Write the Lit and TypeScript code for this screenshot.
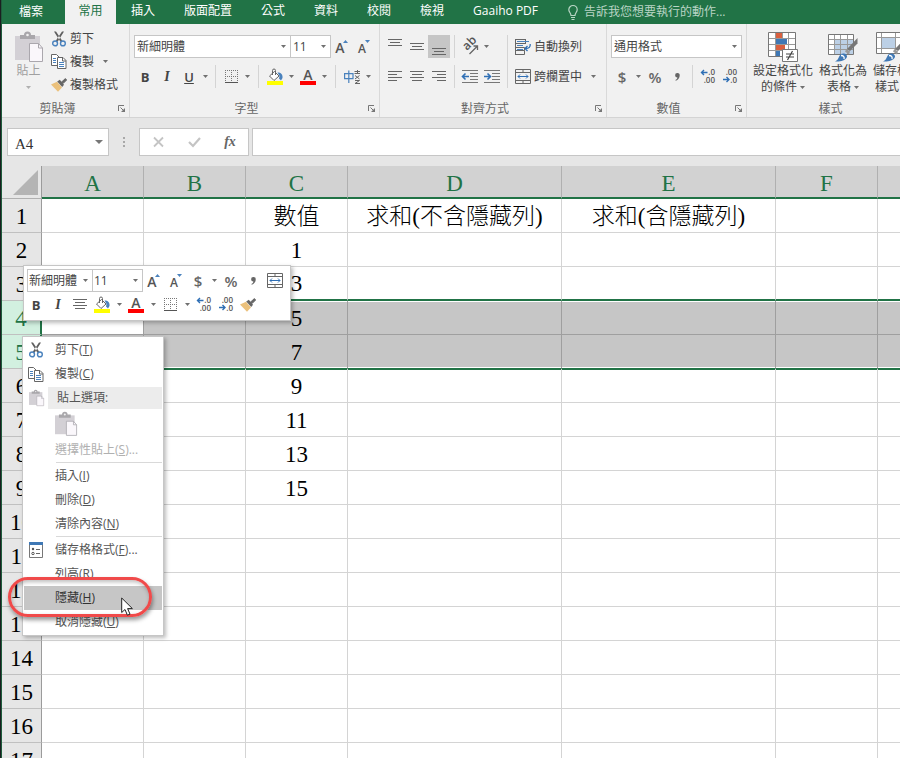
import { LitElement, html, css, svg, nothing, TemplateResult } from "lit";
import { customElement, state } from "lit/decorators.js";
import { classMap } from "lit/directives/class-map.js";

/* ---------- icons ---------- */

const caret = html`<svg class="ic" width="5" height="3" viewBox="0 0 5 3"><path d="M0 0h5L2.5 3z" fill="#707070" /></svg>`;

const scissors = html`<svg class="ic" width="14" height="16" viewBox="0 0 14 16">
  <path d="M2 0.4 4 0.4 10.4 10 8.400 10.8zM12 0.4 10 0.4 3.600 10 5.600 10.8z" fill="#5f5f5f" />
  <circle cx="3.100" cy="12.400" r="2.400" fill="none" stroke="#4a82bd" stroke-width="1.400" />
  <circle cx="10.900" cy="12.400" r="2.400" fill="none" stroke="#4a82bd" stroke-width="1.400" />
</svg>`;

const copy = html`<svg class="ic" width="16" height="15" viewBox="0 0 16 15">
  <path d="M.5 .5h5l2.500 2.500v8.500h-7.500z" fill="#fff" stroke="#666" />
  <path d="M2 4.500h3M2 6.500h3M2 8.500h3" stroke="#4a82bd" />
  <path d="M6.500 3.500h5.500l3 3v8h-8.500z" fill="#fff" stroke="#666" />
  <path d="M11.500 3.500v3.500h3.500" fill="none" stroke="#666" />
  <path d="M8 8.500h5M8 10.500h5M8 12.500h5" stroke="#4a82bd" />
</svg>`;

const brush = html`<svg class="ic" width="16" height="14" viewBox="0 0 16 14">
  <path d="M0 6.500 6 3.800 11 9.600 7 13.800z" fill="#ebc17c" />
  <path d="M6.200 3.400 8.800 1.800 13 6.800 11.200 9z" fill="#666" />
  <path d="M10.400 4.200 14.400.6 15.600 2 12 5.600z" fill="#666" stroke="#666" />
</svg>`;

const paste = (w: number, h: number) => html`<svg class="ic" width=${w} height=${h} viewBox="0 0 28 30">
  <path d="M0 4h25v24H0z" fill="#d3d0d5" />
  <path d="M5 7V3h4a3.500 3.500 0 0 1 7 0h4v4z" fill="#a9a7ab" />
  <circle cx="12.500" cy="3" r="1.300" fill="#f1f1f1" />
  <path d="M14.500 11.500h9l4 4.500v13.500h-13z" fill="#faf7fb" stroke="#aaa7ad" />
  <path d="M23.500 11.500v4.500h4" fill="none" stroke="#aaa7ad" />
</svg>`;

const borders = html`<svg class="ic" width="13" height="13" viewBox="0 0 13 13">
  <path d="M0 .5h13M0 6.500h13M.5 0v12M6.500 0v12M12.500 0v12" stroke="#777" stroke-dasharray="1 1" fill="none" />
  <path d="M0 12.500h13" stroke="#555" />
</svg>`;

const fill = html`<svg class="ic" width="16" height="16" viewBox="0 0 16 16">
  <path d="M2.500 7 7.500 2.500 12 7 7 11.500z" fill="#fff" stroke="#666" />
  <path d="M5.500 6V1.500a1.500 1.500 0 0 1 3 0V6" fill="none" stroke="#666" />
  <path d="M10.500 3.500c3.500 0 5.500 2 5 5.500l-1.500 2.500-2-2 .5-2.500z" fill="#4a82bd" />
  <path d="M0 12h16v4H0z" fill="#ff0" />
</svg>`;

const fontColor = html`<svg class="ic" width="16" height="16" viewBox="0 0 16 16">
  <text x="8" y="11" text-anchor="middle" font-size="14" font-weight="600" fill="#555">A</text>
  <path d="M0 12h16v4H0z" fill="#f00" />
</svg>`;

const grow = html`<svg class="ic" width="14" height="16" viewBox="0 0 14 16">
  <text x="5" y="14" text-anchor="middle" font-size="14" font-weight="600" fill="#555">A</text>
  <path d="M8 4h5L10.500 1z" fill="#4a82bd" />
</svg>`;

const shrink = html`<svg class="ic" width="14" height="16" viewBox="0 0 14 16">
  <text x="5" y="14" text-anchor="middle" font-size="12" font-weight="600" fill="#555">A</text>
  <path d="M8 1h5L10.500 4z" fill="#4a82bd" />
</svg>`;

const phonetic = html`<svg class="ic" width="16" height="14" viewBox="0 0 16 14">
  <path d="M.6 3.600h8.400v5H.6zM4.800 .5v12.500" fill="none" stroke="#4a82bd" stroke-width="1.200" />
  <path d="M10.500 1.500h5.500M10.500 3.500h5.500M13.500 0v4M11 5.500l4.500 3.500M15.500 5.500l-4.500 3.500M11 10.500h4.500l-4.500 3h5" fill="none" stroke="#666" />
</svg>`;

const comma = html`<svg class="ic" width="5" height="8" viewBox="0 0 5 8">
  <path d="M2.300 0a2.300 2.300 0 0 1 2.400 2.500C4.700 5 3 7 .8 7.800L.4 7C1.600 6.400 2.300 5.600 2.400 4.500A2.200 2.200 0 0 1 2.300 0z" fill="#666" />
</svg>`;

const lines = (rows: number[][], h = 11) => html`<svg class="ic" width="14" height=${h} viewBox="0 0 14 ${h}">
  ${rows.map(([x, y, w]) => svg`<path d="M${x} ${y + 0.5}h${w}" stroke="#666" />`)}
</svg>`;
const alignTop = lines([[0, 0, 14], [2, 3, 10], [0, 6, 14]], 16);
const alignMid = lines([[0, 4, 14], [2, 7, 10], [0, 10, 14]], 16);
const alignBottom = lines([[0, 9, 14], [2, 12, 10], [0, 15, 14]], 16);
const alignLeft = lines([[0, 0, 14], [0, 3, 9], [0, 6, 14], [0, 9, 9]]);
const alignCenter = lines([[0, 0, 14], [2, 3, 10], [0, 6, 14], [2, 9, 10]]);
const alignRight = lines([[0, 0, 14], [5, 3, 9], [0, 6, 14], [5, 9, 9]]);

const orientation = html`<svg class="ic" width="17" height="16" viewBox="0 0 17 16">
  <text x="0" y="0" font-size="12" font-weight="600" fill="#555" transform="translate(5 12) rotate(-45)">ab</text>
  <path d="M7.500 15 15 7.500M11.500 7h4v4" fill="none" stroke="#666" stroke-width="1.300" />
</svg>`;

const indent = (out: boolean) => html`<svg class="ic" width="16" height="13" viewBox="0 0 16 13">
  <path d="M0 .5h16M8 3.500h8M8 6.500h8M8 9.500h8M0 12.500h16" stroke="#777" />
  <path d=${out ? "M7 6.500H1M3.500 3.500.5 6.500l3 3" : "M0 6.500h6M3.500 3.500l3 3-3 3"} fill="none" stroke="#2f6fb5" stroke-width="1.600" />
</svg>`;

const wrap = html`<svg class="ic" width="16" height="16" viewBox="0 0 16 16">
  <path d="M.5 0v16M0 .5h10M10.500 0v5M0 4.500h10M.5 8.500h9v3M0 15.500h9.500v-4H.5" fill="none" stroke="#666" />
  <path d="M2 2.500h12M2 6.500h6M2 10.500h6" fill="none" stroke="#4a82bd" />
  <path d="M15.200 5c.3 3-1 4.500-4.700 4.500M12.500 7l-2.500 2.500 2.500 2.500" fill="none" stroke="#2f6fb5" stroke-width="1.300" />
</svg>`;

const merge = html`<svg class="ic" width="16" height="15" viewBox="0 0 16 15">
  <path d="M.5 .5h15v14H.5zM0 3.500h16M0 11.500h16M8 0v3M8 12v3" fill="none" stroke="#666" />
  <path d="M3 7.500h10M5 5.500l-2 2 2 2M11 5.500l2 2-2 2" fill="none" stroke="#2f6fb5" />
</svg>`;

const decimals = (more: boolean) => html`<svg class="ic" width="16" height="15" viewBox="0 0 16 15">
  <text x="15" y="6" text-anchor="end" font-size="8" font-weight="600" fill="#555">${more ? ".0" : ".00"}</text>
  <text x="15" y="14" text-anchor="end" font-size="8" font-weight="600" fill="#555">${more ? ".00" : ".0"}</text>
  <path d=${more ? "M7.500 3.500H1.500M4 1 1.500 3.500 4 6" : "M1 10.500h6M4.500 8 7 10.500 4.500 13"} fill="none" stroke="#2f6fb5" stroke-width="1.400" />
</svg>`;

const launcher = html`<svg class="ic" width="7" height="7" viewBox="0 0 7 7">
  <path d="M.5 6V.5H6M2.500 2.500l3 3" fill="none" stroke="#777" /><path d="M7 3v4H3z" fill="#777" />
</svg>`;

const condFormat = html`<svg class="ic" width="30" height="30" viewBox="0 0 30 30">
  <path d="M.5 .5h27v24H.5z" fill="#fff" stroke="#777" />
  <path d="M7.500 1v23M14.500 1v23M20.500 1v23M1 6.500h26M1 12.500h26M1 18.500h26" stroke="#999" />
  <path d="M8 1h6v5H8zM8 13h9v5H8z" fill="#d9603f" /><path d="M8 7h11v5H8zM8 19h4v5H8z" fill="#3f78b5" />
  <path d="M14.500 17.500h15v12h-15z" fill="#fff" stroke="#777" />
  <path d="M18 22h8M18 25h8M24.500 19l-5 9" stroke="#444" stroke-width="1.200" />
</svg>`;

const brushOver = svg`<path d="M29.500 6v5.500L22 19l-3-2z" fill="#777" /><path d="M18.500 17l3.500 2.500-1 3-4-3z" fill="#999" />
  <path d="M7 29.500c4-1.500 3-4.500 6-7.500 3-1.500 6.500 .5 6 3-2 4-7.500 5-12 4.500z" fill="#3f78b5" /><path d="M13 23.500c2.500 0 3.500 1 3 3.500" fill="none" stroke="#fff" stroke-width="1.300" />`;

const tableFormat = html`<svg class="ic" width="30" height="30" viewBox="0 0 30 30">
  <path d="M.5 2.500h25v20H.5z" fill="#fff" stroke="#777" /><path d="M7 7h18v15H7z" fill="#bcd0e6" />
  <path d="M6.500 3v19M12.500 3v19M19.500 3v19M1 7.500h24M1 12.500h24M1 17.500h24" stroke="#999" />
  ${brushOver}
</svg>`;

const cellStyle = html`<svg class="ic" width="30" height="30" viewBox="0 0 30 30">
  <path d="M.5 .5h27v21H.5z" fill="#fff" stroke="#777" />
  <path d="M5.500 1v20M19.500 1v20M1 5.500h26M1 16.500h26" stroke="#999" />
  <path d="M6 6h13v10H6z" fill="#bcd0e6" />
  ${brushOver}
</svg>`;

const bulb = html`<svg class="ic" width="10" height="15" viewBox="0 0 10 15">
  <path d="M3 10.500C3 8 .8 7 .8 4.700a4.200 4.200 0 0 1 8.400 0C9.200 7 7 8 7 10.500zM3 12.500h4M3.500 14.500h3" fill="none" stroke="#b9d5c5" stroke-width="1.200" />
</svg>`;

const cellsDialog = html`<svg class="ic" width="14" height="16" viewBox="0 0 14 16">
  <path d="M.5 .5h13v15H.5z" fill="#fff" stroke="#777" /><path d="M0 0h14v3H0z" fill="#3f78b5" />
  <circle cx="4" cy="7" r="1.200" fill="#555" /><circle cx="4" cy="11.500" r="1.200" fill="none" stroke="#555" />
  <path d="M7 7.500h4M7 11.500h4" stroke="#666" />
</svg>`;

/* ---------- data ---------- */

const COLS = [
  { id: "A", cls: "narrow" }, { id: "B", cls: "narrow" }, { id: "C", cls: "narrow" },
  { id: "D", cls: "wide" }, { id: "E", cls: "wide" }, { id: "F", cls: "narrow" },
  ..."GHIJKLMNOP".split("").map((id) => ({ id, cls: "narrow" })),
];

const CELLS: Record<string, string> = {
  C1: "數值", D1: "求和(不含隱藏列)", E1: "求和(含隱藏列)",
  C2: "1", C3: "3", C4: "5", C5: "7", C6: "9", C7: "11", C8: "13", C9: "15",
};

@customElement("app-root")
export class AppRoot extends LitElement {
  @state() private bold = false;

  static styles = css`
    :host {
      display: block;
      font: 12px/16px "Open Sans", "Noto Sans CJK TC", sans-serif;
      color: #444;
    }
    * { box-sizing: border-box; }
    button, select, input { font: inherit; color: inherit; margin: 0; padding: 0; border: 0; background: none; border-radius: 0; outline: none; }
    .ic { display: block; flex: none; overflow: visible; }
    .app { height: 100vh; display: flex; flex-direction: column; overflow: hidden; background: #e6e6e6; border-left: 1px solid #1b1e20; box-shadow: inset 1px 0 #1e5c3c; padding-left: 1px; }

    /* tabs */
    .tabs { display: flex; flex: none; height: 24px; background: #217346; color: #fff; white-space: nowrap; }
    .file { width: 63px; padding-right: 5px; }
    .home { width: 51px; background: #f1f1f1; color: #217346; padding-bottom: 2px; }
    .nav { display: flex; gap: 29px; padding: 0 30px 2px 15px; }
    .tell { display: flex; align-items: center; gap: 6px; color: #b9d5c5; }

    /* ribbon */
    .ribbon { display: flex; flex: none; height: 94px; background: #f1f1f1; border-bottom: 1px solid #d4d4d4; white-space: nowrap; }
    .group { display: flex; flex-direction: column; flex: none; position: relative; border-right: 1px solid #d9d9d9; }
    .group.g-clip { width: 128px; }
    .group.g-font { width: 250px; }
    .group.g-align { width: 227px; }
    .group.g-num { width: 140px; }
    .group.g-style { width: 168px; }
    .body { flex: 1; display: flex; flex-direction: column; gap: 7px; padding: 11px 4px 0; }
    .body.cols { flex-direction: row; gap: 0; }
    .foot { display: flex; height: 20px; padding-top: 3px; align-items: center; color: #666; }
    .foot span { flex: 1; text-align: center; }
    .foot button { width: 16px; height: 16px; display: grid; place-items: center; }
    .row { display: flex; align-items: center; height: 23px; }
    .stack { display: flex; flex-direction: column; gap: 7px; }
    .tb { width: 22px; height: 23px; display: grid; place-items: center; flex: none; }
    .tb.on { background: #c6c6c6; }
    .dd { width: 11px; height: 23px; display: grid; place-items: center; flex: none; }
    .sep { width: 11px; height: 23px; display: grid; justify-content: center; flex: none; }
    .sep::before { content: ""; width: 1px; background: #d4d4d4; }
    .sep.slim { width: 9px; }
    .sep.tall { height: 53px; }
    .b { font-weight: 700; font-size: 13px; }
    .i { font: italic 700 14px/16px "Liberation Serif", serif; }
    .u { font-weight: 600; font-size: 13px; text-decoration: underline; }
    .sym { font-size: 15px; font-weight: 600; color: #666; }
    .field { display: grid; height: 23px; flex: none; background: #fff; border: 1px solid #c6c6c6; align-items: center; }
    .field + .field { border-left: 0; }
    .field > * { grid-area: 1 / 1; }
    .field select { appearance: none; width: 100%; height: 21px; padding-left: 2px; color: #444; }
    .field .ic { justify-self: end; margin-right: 4px; pointer-events: none; }
    .f-font { width: 157px; }
    .f-size { width: 40px; }
    .f-num { width: 131px; }
    .m-font { width: 66px; }
    .m-size { width: 50px; }
    .labelled { display: flex; align-items: center; gap: 3px; width: 76px; height: 23px; padding-left: 3px; }
    .clip { display: flex; padding-top: 3px; flex: 1; }
    .paste { width: 49px; display: flex; flex-direction: column; align-items: center; padding: 5px 0 0 4px; gap: 1px; color: #a0a0a0; }
    .paste > .ic:last-child { margin-top: 6px; opacity: 0.5; }
    .cliplist { display: flex; flex-direction: column; }
    .cliplist button { display: flex; align-items: center; height: 23px; gap: 3px; }
    .cliplist .dd { justify-content: center; margin-left: 6px; }
    .slot { width: 16px; display: grid; place-items: center; flex: none; }
    .bigs { display: flex; gap: 6px; padding: 8px 6px 0; flex: 1; align-items: flex-start; }
    .big { display: flex; flex-direction: column; align-items: center; gap: 1px; line-height: 16px; }
    .big .line { display: flex; align-items: center; justify-content: center; gap: 3px; }

    /* formula bar */
    .fbar { display: flex; flex: none; height: 48px; padding: 10px 0 0 5px; }
    .fbar > * { height: 28px; }
    .name { width: 102px; display: flex; align-items: center; background: #fff; border: 1px solid #c6c6c6; padding-right: 4px; }
    .name input { flex: 1; min-width: 0; padding: 3px 0 0 7px; font: 15px/20px "Liberation Serif", serif; color: #333; }
    .name button { height: 26px; }
    .grip { width: 30px; display: grid; place-items: center; }
    .fx { width: 110px; display: flex; justify-content: space-around; align-items: center; background: #fff; border: 1px solid #c6c6c6; }
    .fx button { width: 28px; height: 24px; display: grid; place-items: center; font: italic 700 14px/20px "Liberation Serif", serif; color: #666; }
    .formula { flex: 1; min-width: 0; margin-left: 3px; background: #fff; border: 1px solid #c6c6c6; border-right: 0; padding: 0 8px; }

    /* sheet */
    .sheet { flex: 1; min-height: 0; position: relative; overflow: hidden; background: #fff; }
    table { table-layout: fixed; width: 0; border-collapse: separate; border-spacing: 0; font: 300 23px/30px "Liberation Serif", "Noto Sans CJK TC", serif; color: #000; }
    .head { width: 40px; }
    .narrow { width: 102px; }
    .wide { width: 214px; }
    th, td { height: 34px; padding: 3px 0 0; text-align: center; font-weight: 300; white-space: nowrap; border-right: 1px solid #d4d4d4; border-bottom: 1px solid #d4d4d4; }
    thead th { height: 33px; padding-top: 5px; line-height: 26px; background: #d2d2d2; color: #217346; border-right-color: #b0b0b0; border-bottom: 2px solid #217346; }
    thead .corner { background: #e6e6e6; border-right-color: #9b9b9b; border-bottom: 1px solid #b0b0b0; padding: 0; }
    .corner .ic { margin: 0 0 0 11px; }
    tbody th { background: #e6e6e6; border-right-color: #9b9b9b; border-bottom-color: #c0c0c0; }
    .above td { border-bottom: 2px solid #217346; padding-top: 2px; }
    .sel th { background: #d2f0e0; color: #217346; border-right: 2px solid #217346; }
    .sel td { background: #c6c6c6; border-color: #9f9f9f; }
    .first td { box-shadow: inset 0 1px #fff; }
    .first td.active { background: #fff; }
    .last td { border-bottom-color: #217346; box-shadow: inset 0 -1px #fff; }
    .below td { box-shadow: inset 0 1px #217346; }

    /* floating layers */
    .mini { position: absolute; left: 21px; top: 99px; width: 268px; height: 56px; padding: 3px 0 0 3px; background: #fff; border: 1px solid #c6c6c6; box-shadow: 2px 2px 4px #0004; white-space: nowrap; }
    .mini .field select { padding-left: 1px; }
    .mini .row + .row { height: 25px; margin-left: -2px; }
    .mini .row + .row .dd { width: 12px; }
    .menu { position: absolute; left: 20px; top: 170px; width: 142px; padding: 1px; display: flex; flex-direction: column; background: #fff; border: 1px solid #c6c6c6; box-shadow: 2px 2px 4px #0004; color: #555; white-space: nowrap; }
    .item { display: grid; grid-template-columns: 24px 1fr; align-items: center; height: 24px; text-align: left; }
    .item .slot { width: 24px; }
    .item .txt { padding-left: 7px; }
    .item.dim { color: #b0b0b0; }
    .item.hot { background: #c6c6c6; color: #333; }
    .item.title .txt { background: #ececec; line-height: 22px; padding-left: 9px; }
    .item.opt { height: 28px; }
    .rule { height: 1px; background: #d9d9d9; margin: 0 0 1px 32px; }
    .callout { position: absolute; left: 6px; top: 411px; width: 144px; height: 40px; border: 3px solid #f04a4a; border-radius: 20px; box-shadow: 1px 3px 4px #0006, inset 1px 2px 4px #0004; pointer-events: none; }
    .pointer { position: absolute; left: 119px; top: 431px; pointer-events: none; }
  `;

  private tb(label: string, content: unknown, cls = "") {
    return html`<button class="tb ${cls}" aria-label=${label}>${content}</button>`;
  }
  private dd(label: string) {
    return html`<button class="dd" aria-label=${label}>${caret}</button>`;
  }
  private field(label: string, value: string, cls: string) {
    return html`<label class="field ${cls}"><select aria-label=${label}><option>${value}</option></select>${caret}</label>`;
  }
  private group(cls: string, label: string, body: TemplateResult, launch = true) {
    return html`<section class="group ${cls}" aria-label=${label}>${body}
      <div class="foot"><span>${label}</span>${launch ? html`<button aria-label="${label}設定">${launcher}</button>` : nothing}</div>
    </section>`;
  }
  private boldButton() {
    return html`<button class="tb b" aria-label="粗體" aria-pressed=${this.bold} @click=${() => (this.bold = !this.bold)}>B</button>`;
  }

  private renderTabs() {
    return html`<nav class="tabs">
      <button class="file">檔案</button><button class="home">常用</button>
      <div class="nav">${["插入", "版面配置", "公式", "資料", "校閱", "檢視", "Gaaiho PDF"].map((t) => html`<button>${t}</button>`)}</div>
      <button class="tell">${bulb}<span>告訴我您想要執行的動作...</span></button>
    </nav>`;
  }

  private renderRibbon() {
    return html`<div class="ribbon">
      ${this.group("g-clip", "剪貼簿", html`<div class="clip">
        <button class="paste">${paste(28, 30)}<span>貼上</span>${caret}</button>
        <div class="cliplist">
          <button><span class="slot">${scissors}</span>剪下</button>
          <div class="row"><button><span class="slot">${copy}</span>複製</button>${this.dd("複製選項")}</div>
          <button><span class="slot">${brush}</span>複製格式</button>
        </div>
      </div>`)}
      ${this.group("g-font", "字型", html`<div class="body">
        <div class="row">${this.field("字型", "新細明體", "f-font")}${this.field("字型大小", "11", "f-size")}${this.tb("放大字型", grow)}${this.tb("縮小字型", shrink)}</div>
        <div class="row">${this.boldButton()}${this.tb("斜體", "I", "i")}${this.tb("底線", "U", "u")}${this.dd("底線選項")}<i class="sep slim"></i>${this.tb("框線", borders)}${this.dd("框線選項")}<i class="sep"></i>${this.tb("填滿色彩", fill)}${this.dd("填滿選項")}${this.tb("字型色彩", fontColor)}${this.dd("色彩選項")}<i class="sep"></i>${this.tb("注音", phonetic)}${this.dd("注音選項")}</div>
      </div>`)}
      ${this.group("g-align", "對齊方式", html`<div class="body cols">
        <div class="stack">
          <div class="row">${this.tb("靠上", alignTop)}${this.tb("置中", alignMid)}${this.tb("靠下", alignBottom, "on")}<i class="sep slim"></i>${this.tb("方向", orientation)}${this.dd("方向選項")}</div>
          <div class="row">${this.tb("靠左", alignLeft)}${this.tb("水平置中", alignCenter)}${this.tb("靠右", alignRight)}<i class="sep slim"></i>${this.tb("減少縮排", indent(true))}${this.tb("增加縮排", indent(false))}</div>
        </div>
        <i class="sep slim tall"></i>
        <div class="stack">
          <button class="labelled">${wrap}自動換列</button>
          <div class="row"><button class="labelled">${merge}跨欄置中</button>${this.dd("跨欄置中選項")}</div>
        </div>
      </div>`)}
      ${this.group("g-num", "數值", html`<div class="body">
        <div class="row">${this.field("數值格式", "通用格式", "f-num")}</div>
        <div class="row">${this.tb("貨幣", "$", "sym")}${this.dd("貨幣選項")}${this.tb("百分比", "%", "sym")}${this.tb("千分位", comma)}<i class="sep slim"></i>${this.tb("增加小數位數", decimals(true))}${this.tb("減少小數位數", decimals(false))}</div>
      </div>`)}
      ${this.group("g-style", "樣式", html`<div class="bigs">
        <button class="big">${condFormat}<span>設定格式化<span class="line">的條件${caret}</span></span></button>
        <button class="big">${tableFormat}<span>格式化為<span class="line">表格${caret}</span></span></button>
        <button class="big">${cellStyle}<span>儲存格<span class="line">樣式${caret}</span></span></button>
      </div>`, false)}
    </div>`;
  }

  private renderFormulaBar() {
    return html`<div class="fbar">
      <div class="name"><input aria-label="名稱方塊" value="A4" /><button class="dd" aria-label="名稱清單"><svg class="ic" width="8" height="4" viewBox="0 0 8 4"><path d="M0 0h8L4 4z" fill="#777" /></svg></button></div>
      <div class="grip"><svg class="ic" width="2" height="10" viewBox="0 0 2 10"><path d="M0 0h2v2H0zM0 4h2v2H0zM0 8h2v2H0z" fill="#a8a8a8" /></svg></div>
      <div class="fx">
        <button aria-label="取消"><svg class="ic" width="11" height="10" viewBox="0 0 11 10"><path d="M1 .5l9 9M10 .5l-9 9" stroke="#c4c4c4" stroke-width="1.800" /></svg></button>
        <button aria-label="輸入"><svg class="ic" width="13" height="10" viewBox="0 0 13 10"><path d="M1 5l4 4 7-8" fill="none" stroke="#c4c4c4" stroke-width="2.200" /></svg></button>
        <button aria-label="插入函數">fx</button>
      </div>
      <input class="formula" aria-label="資料編輯列" />
    </div>`;
  }

  private renderTable() {
    const rows = Array.from({ length: 40 }, (_, i) => i + 1);
    return html`<table>
      <colgroup><col class="head" />${COLS.map((c) => html`<col class=${c.cls} />`)}</colgroup>
      <thead><tr><th class="corner"><svg class="ic" width="25" height="25" viewBox="0 0 25 25"><path d="M25 0v25H0z" fill="#b4b4b4" /></svg></th>${COLS.map((c) => html`<th scope="col">${c.id}</th>`)}</tr></thead>
      <tbody>${rows.map((r) => html`<tr class=${classMap({ above: r === 3, sel: r === 4 || r === 5, first: r === 4, last: r === 5, below: r === 6 })}>
        <th scope="row">${r}</th>${COLS.map((c) => html`<td class=${classMap({ active: c.id + r === "A4" })}>${CELLS[c.id + r] ?? ""}</td>`)}
      </tr>`)}</tbody>
    </table>`;
  }

  private renderMini() {
    return html`<div class="mini" role="toolbar" aria-label="迷你工具列">
      <div class="row">${this.field("字型", "新細明體", "m-font")}${this.field("字型大小", "11", "m-size")}${this.tb("放大字型", grow)}${this.tb("縮小字型", shrink)}${this.tb("貨幣", "$", "sym")}${this.dd("貨幣選項")}${this.tb("百分比", "%", "sym")}${this.tb("千分位", comma)}${this.tb("跨欄置中", merge)}</div>
      <div class="row">${this.boldButton()}${this.tb("斜體", "I", "i")}${this.tb("置中", alignCenter)}${this.tb("填滿色彩", fill)}${this.dd("填滿選項")}${this.tb("字型色彩", fontColor)}${this.dd("色彩選項")}${this.tb("框線", borders)}${this.dd("框線選項")}${this.tb("增加小數位數", decimals(true))}${this.tb("減少小數位數", decimals(false))}${this.tb("複製格式", brush)}</div>
    </div>`;
  }

  private item(text: string, key: string, opts: { icon?: unknown; cls?: string; more?: boolean } = {}) {
    return html`<button class="item ${opts.cls ?? ""}" role="menuitem"><span class="slot">${opts.icon ?? nothing}</span><span class="txt">${text}(<u>${key}</u>)${opts.more ? "..." : ""}</span></button>`;
  }

  private renderMenu() {
    return html`<div class="menu" role="menu">
      ${this.item("剪下", "T", { icon: scissors })}
      ${this.item("複製", "C", { icon: copy })}
      <div class="item title"><span class="slot">${paste(15, 16)}</span><span class="txt">貼上選項:</span></div>
      <button class="item opt" role="menuitem" aria-label="貼上"><span class="slot"></span><span class="txt">${paste(22, 24)}</span></button>
      ${this.item("選擇性貼上", "S", { cls: "dim", more: true })}
      <div class="rule"></div>
      ${this.item("插入", "I")}${this.item("刪除", "D")}${this.item("清除內容", "N")}
      <div class="rule"></div>
      ${this.item("儲存格格式", "F", { icon: cellsDialog, more: true })}
      ${this.item("列高", "R")}${this.item("隱藏", "H", { cls: "hot" })}${this.item("取消隱藏", "U")}
    </div>`;
  }

  render() {
    return html`<div class="app">
      ${this.renderTabs()}${this.renderRibbon()}${this.renderFormulaBar()}
      <main class="sheet">
        ${this.renderTable()}${this.renderMini()}${this.renderMenu()}
        <div class="callout"></div>
        <svg class="pointer" width="13" height="19" viewBox="0 0 13 19"><path d="M.7 1v14.500l3.300-3 2.400 5.700 2.600-1.100-2.400-5.500h4.800z" fill="#fff" stroke="#222" /></svg>
      </main>
    </div>`;
  }
}
